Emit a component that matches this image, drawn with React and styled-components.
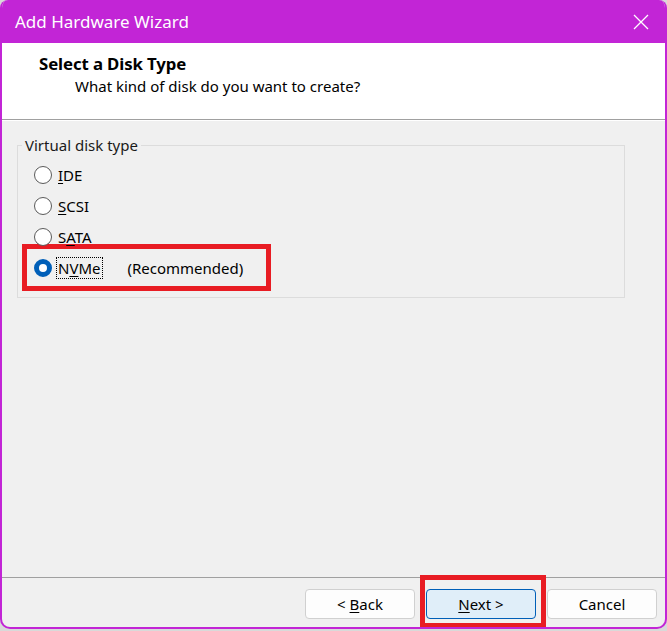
import React, { useState } from 'react';
import styled, { createGlobalStyle } from 'styled-components';

const GlobalStyle = createGlobalStyle`
  html, body {
    margin: 0;
    padding: 0;
    background: #d9d9d9;
  }
  body {
    font-family: "Noto Sans", "Open Sans", sans-serif;
    font-size: 15px;
    color: #000;
  }
`;

const Page = styled.div`
  width: 667px;
  height: 631px;
  overflow: hidden;
`;

const Window = styled.div`
  width: 667px;
  height: 629px;
  box-sizing: border-box;
  border: 2px solid #c225d6;
  border-top: none;
  border-radius: 8px 8px 10px 10px;
  background: #f0f0f0;
  display: flex;
  flex-direction: column;
  overflow: hidden;
`;

const TitleBar = styled.div`
  height: 43px;
  flex-shrink: 0;
  background: #c225d6;
  display: flex;
  align-items: center;
  justify-content: space-between;
  color: #fff;
  font-size: 17px;
  margin: 0 -2px;
  padding-left: 15px;
`;

const CloseButton = styled.button`
  width: 46px;
  height: 43px;
  border: none;
  background: transparent;
  display: flex;
  align-items: center;
  justify-content: center;
  padding: 0;
  margin-right: 3px;
`;

const Header = styled.div`
  height: 66px;
  flex-shrink: 0;
  background: #fff;
  border-bottom: 1px solid #a0a0a0;
  padding: 10px 0 0 37px;
`;

const HeaderTitle = styled.div`
  font-weight: 700;
  font-size: 16.8px;
  line-height: 22px;
  letter-spacing: -0.1px;
`;

const HeaderSub = styled.div`
  font-size: 15px;
  line-height: 22px;
  padding-left: 36px;
`;

const Body = styled.div`
  flex: 1;
  border-top: 1px solid #fff;
  padding: 15px 40px 0 15px;
`;

const Group = styled.fieldset`
  margin: 0;
  border: 1px solid #dcdcdc;
  padding: 5px 0 6px 4px;
  min-height: 0;
`;

const Legend = styled.legend`
  padding: 0 3px;
  margin-left: 0;
  font-size: 15px;
  line-height: 18px;
  color: #1a1a1a;
`;

const Option = styled.label`
  display: flex;
  align-items: center;
  height: 31px;
`;

const Highlight = styled.div`
  width: 249px;
  height: 47px;
  box-sizing: border-box;
  border: 5px solid #e81c23;
  margin: -8px 0 0 0;
  padding: 0 0 0 7px;
  display: flex;
  align-items: center;
`;

const Radio = styled.span`
  width: 18px;
  height: 18px;
  box-sizing: border-box;
  border-radius: 50%;
  border: ${p => (p.checked ? '5px solid #005fb8' : '1px solid #5a5a5a')};
  background: #fff;
  flex-shrink: 0;
  margin: 0 4px 0 ${p => (p.inBox ? '0' : '12px')};
`;

const RadioText = styled.span`
  font-size: 15px;
  line-height: 20px;
  padding: 0 1px;
  border: 1px ${p => (p.focused ? 'dotted #000' : 'solid transparent')};
  u { text-decoration-thickness: 1px; text-underline-offset: 2px; }
`;

const Note = styled.span`
  margin-left: 25px;
  font-size: 15px;
`;

const Footer = styled.div`
  height: 50px;
  box-sizing: border-box;
  flex-shrink: 0;
  border-top: 1px solid #a0a0a0;
  display: flex;
  justify-content: flex-end;
  align-items: flex-start;
  padding: 11px 8px 0 0;
  gap: 11px;
`;

const Button = styled.button`
  width: 110px;
  height: 30px;
  box-sizing: border-box;
  border-radius: 4px;
  border: 1px solid ${p => (p.primary ? '#005fb8' : '#d0d0d0')};
  background: ${p => (p.primary ? '#e0eef9' : '#fdfdfd')};
  font-family: "Noto Sans", "Open Sans", sans-serif;
  font-size: 15px;
  color: #000;
  padding: 0;
  flex-shrink: 0;
  u { text-decoration-thickness: 1px; text-underline-offset: 2px; }
`;

const NextWrap = styled.div`
  border: 5px solid #e81c23;
  padding: 9px 5px 4px 1px;
  margin: -14px -10px 0 -6px;
  flex-shrink: 0;
`;

export default function App() {
  const [type, setType] = useState('nvme');
  const opts = [
    { id: 'ide', pre: '', u: 'I', post: 'DE' },
    { id: 'scsi', pre: '', u: 'S', post: 'CSI' },
    { id: 'sata', pre: 'S', u: 'A', post: 'TA' },
  ];
  return (
    <Page>
      <GlobalStyle />
      <Window>
        <TitleBar>
          <span>Add Hardware Wizard</span>
          <CloseButton aria-label="Close">
            <svg width="16" height="16" viewBox="0 0 16 16">
              <path d="M1 1 L15 15 M15 1 L1 15" stroke="#fff" strokeWidth="1.3" />
            </svg>
          </CloseButton>
        </TitleBar>
        <Header>
          <HeaderTitle>Select a Disk Type</HeaderTitle>
          <HeaderSub>What kind of disk do you want to create?</HeaderSub>
        </Header>
        <Body>
          <Group>
            <Legend>Virtual disk type</Legend>
            {opts.map(o => (
              <Option key={o.id} onClick={() => setType(o.id)}>
                <Radio checked={type === o.id} />
                <RadioText>{o.pre}<u>{o.u}</u>{o.post}</RadioText>
              </Option>
            ))}
            <Highlight onClick={() => setType('nvme')}>
              <Radio inBox checked={type === 'nvme'} />
              <RadioText focused>N<u>V</u>Me</RadioText>
              <Note>(Recommended)</Note>
            </Highlight>
          </Group>
        </Body>
        <Footer>
          <Button>&lt; <u>B</u>ack</Button>
          <NextWrap>
            <Button primary><u>N</u>ext &gt;</Button>
          </NextWrap>
          <Button>Cancel</Button>
        </Footer>
      </Window>
    </Page>
  );
}
